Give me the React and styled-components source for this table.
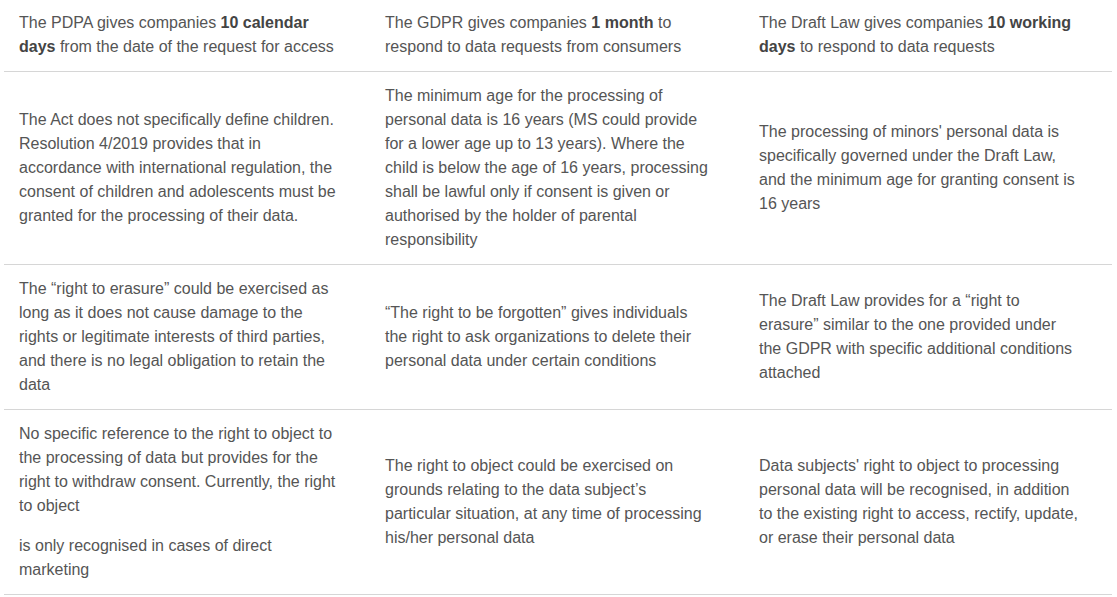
import styled, { createGlobalStyle } from "styled-components";

const GlobalStyle = createGlobalStyle`
  body {
    margin: 0;
    background: #fff;
  }
`;

const Table = styled.table`
  width: 1108px;
  margin: -1px 0 0 4px;
  border-collapse: collapse;
  table-layout: fixed;
  font-family: "Liberation Sans", Arial, sans-serif;
  font-size: 16px;
  line-height: 24px;
  color: #555;
`;

const Col = styled.col`
  width: ${(p) => p.$w}px;
`;

const Row = styled.tr`
  border-bottom: 1px solid #d6d6d6;
`;

const Cell = styled.td`
  padding: 12px 34px 12px 15px;
  vertical-align: middle;
  text-align: left;

  b {
    font-weight: 700;
    color: #444;
  }
`;

const Para = styled.p`
  margin: 0 0 16px;

  &:last-child {
    margin-bottom: 0;
  }
`;

const rows = [
  [
    <>The PDPA gives companies <b>10 calendar days</b> from the date of the request for access</>,
    <>The GDPR gives companies <b>1 month</b> to respond to data requests from consumers</>,
    <>The Draft Law gives companies <b>10 working days</b> to respond to data requests</>,
  ],
  [
    <>The Act does not specifically define children. Resolution 4/2019 provides that in accordance with international regulation, the consent of children and adolescents must be granted for the processing of their data.</>,
    <>The minimum age for the processing of personal data is 16 years (MS could provide for a lower age up to 13 years). Where the child is below the age of 16 years, processing shall be lawful only if consent is given or authorised by the holder of parental responsibility</>,
    <>The processing of minors' personal data is specifically governed under the Draft Law, and the minimum age for granting consent is 16 years</>,
  ],
  [
    <>The “right to erasure” could be exercised as long as it does not cause damage to the rights or legitimate interests of third parties, and there is no legal obligation to retain the data</>,
    <>“The right to be forgotten” gives individuals the right to ask organizations to delete their personal data under certain conditions</>,
    <>The Draft Law provides for a “right to erasure” similar to the one provided under the GDPR with specific additional conditions attached</>,
  ],
  [
    <>
      <Para>No specific reference to the right to object to the processing of data but provides for the right to withdraw consent. Currently, the right to object</Para>
      <Para>is only recognised in cases of direct marketing</Para>
    </>,
    <>The right to object could be exercised on grounds relating to the data subject’s particular situation, at any time of processing his/her personal data</>,
    <>Data subjects' right to object to processing personal data will be recognised, in addition to the existing right to access, rectify, update, or erase their personal data</>,
  ],
];

export default function App() {
  return (
    <>
      <GlobalStyle />
      <Table>
        <colgroup>
          <Col $w={366} />
          <Col $w={374} />
          <Col $w={368} />
        </colgroup>
        <tbody>
          {rows.map((cells, i) => (
            <Row key={i}>
              {cells.map((c, j) => (
                <Cell key={j}>{c}</Cell>
              ))}
            </Row>
          ))}
        </tbody>
      </Table>
    </>
  );
}
